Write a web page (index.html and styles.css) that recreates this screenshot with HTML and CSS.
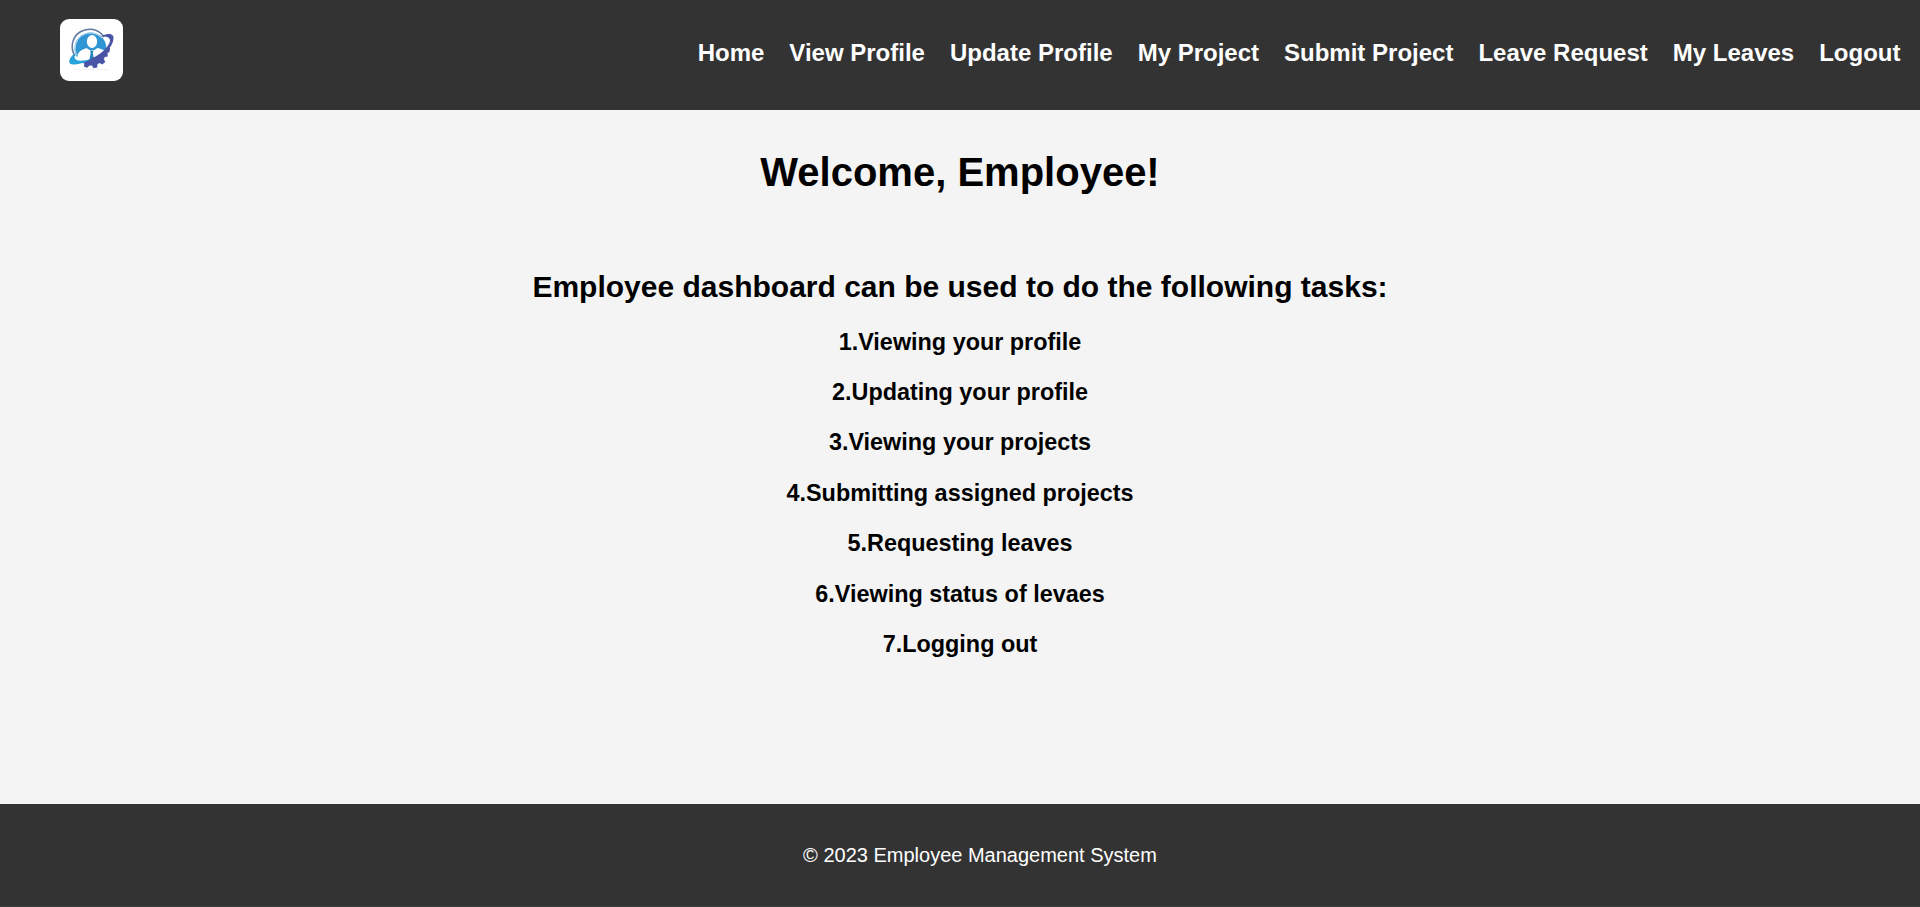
FILE: index.html
```html
<!DOCTYPE html>
<html lang="en">
<head>
<meta charset="utf-8">
<title>Employee Dashboard</title>
<link rel="stylesheet" href="styles.css">
</head>
<body>
<header class="header">
  <svg class="logo" viewBox="0 0 63 62" aria-hidden="true">
    <rect width="63" height="62" rx="9" fill="#fff"/>
    <circle cx="30.500" cy="29.500" r="16" fill="#2f96d3"/>
    <path d="M15 37A17 17 0 0 1 44 18" fill="none" stroke="#61799f" stroke-width="1.500"/>
    <path d="M16.500 36A15.500 15.500 0 0 1 42 19" fill="none" stroke="#b9dcf0" stroke-width="1"/>
    <ellipse cx="32" cy="22.500" rx="5.200" ry="6.500" fill="#fff"/>
    <path d="M17 42c0-9 3-10.500 9.500-13l3 2h5l3-2c4 1 7.500 2 8.500 4-6 8-16 11-29 9z" fill="#fff"/>
    <path d="M30 31.500h3.500l-.7 2.500 1.200 6-2.300 2.500-2.200-2.500 1.200-6z" fill="#2484bd"/>
    <path d="M25 42.500C36 39 44 34 48.500 28l1.500 1-.5 4-2 1 .3 3.500-3 .5-1 2 1.500 3-3 2.500-2.800-1.500-2 1.200-.3 3.200-3.700.8-1.500-2.700-3 .2-1.500 2-3.500-1 .3-3.200-3-1z" fill="#4a54a6"/>
    <path d="M40 17.500c7-3.500 14-3.500 13.500 2C53 29 42 38 27 43.500l-2-1.500c14-4 24-14 25-20 .6-4-4-5-10-4.500z" fill="#4a54a6"/>
    <path d="M14.500 34c-7 7-7 12 0 11.500 5-.3 11-2 17-5.500-6 1.500-12 2.500-15 1-2-1.200-2.500-3.500-2-7z" fill="#27a3db"/>
    <path d="M14 50.500h35" stroke="#f1f1f3" stroke-width="1"/>
  </svg>
  <nav class="nav">
    <a>Home</a><a>View Profile</a><a>Update Profile</a><a>My Project</a><a>Submit Project</a><a>Leave Request</a><a>My Leaves</a><a>Logout</a>
  </nav>
</header>
<main class="main">
  <h1>Welcome, Employee!</h1>
  <h2>Employee dashboard can be used to do the following tasks:</h2>
  <h3>1.Viewing your profile</h3>
  <h3>2.Updating your profile</h3>
  <h3>3.Viewing your projects</h3>
  <h3>4.Submitting assigned projects</h3>
  <h3>5.Requesting leaves</h3>
  <h3>6.Viewing status of levaes</h3>
  <h3>7.Logging out</h3>
</main>
<footer class="footer"><p>© 2023 Employee Management System</p></footer>
</body>
</html>
```
FILE: styles.css
```css
* { box-sizing: border-box; }
body {
  margin: 0;
  height: 907px;
  display: flex;
  flex-direction: column;
  overflow: hidden;
  background: #f4f4f4;
  color: #000;
  font: 20px "Liberation Sans", Arial, sans-serif;
}
.header {
  height: 110px;
  flex: none;
  display: flex;
  justify-content: space-between;
  align-items: flex-start;
  padding: 19px 19.5px 0 60px;
  background: #333;
}
.logo { width: 63px; height: 62px; }
.nav {
  display: flex;
  gap: 25px;
  padding-top: 20px;
  color: #fff;
  font-size: 24px;
  line-height: 27px;
  font-weight: bold;
}
.main {
  flex: 1;
  padding-top: 39px;
  text-align: center;
}
h1, h2, h3 { margin: 0; }
h1 { font-size: 40px; line-height: 46px; }
h2 { font-size: 30px; line-height: 34px; margin-top: 75px; }
h3 { font-size: 23.4px; line-height: 27px; margin-bottom: 23.4px; }
h2 + h3 { margin-top: 24.6px; }
.footer {
  flex: none;
  height: 103px;
  padding: 40px 0 0 40px;
  background: #333;
  border-bottom: 1px solid #3a403e;
  color: #fff;
  text-align: center;
}
.footer p { margin: 0; line-height: 23px; }
```
